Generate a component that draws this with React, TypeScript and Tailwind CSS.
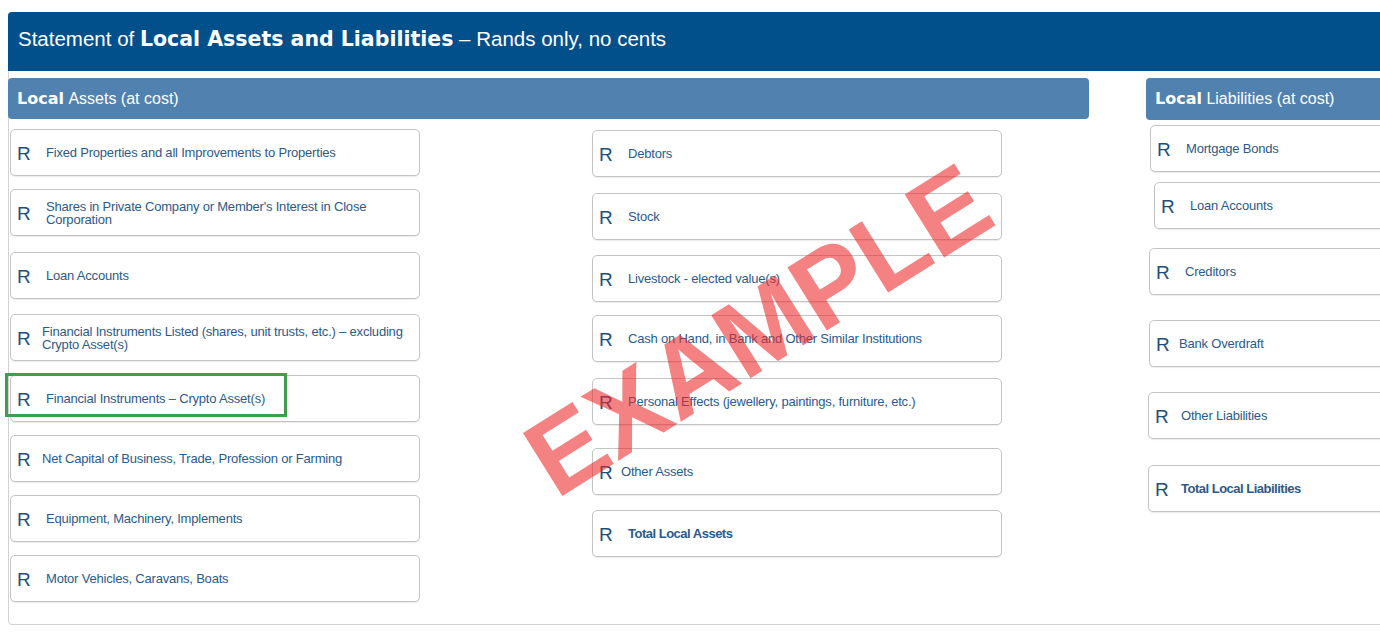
const LABEL = "font-['Liberation_Sans',Arial,sans-serif] text-[13px] tracking-[-0.2px]";

type Row = { label: string; gap: string; pad?: string; bold?: boolean; two?: boolean; flag?: boolean; shift?: string };

const LEFT: Row[] = [
  { label: "Fixed Properties and all Improvements to Properties", gap: "mt-[10px]" },
  { label: "Shares in Private Company or Member's Interest in Close Corporation", gap: "mt-[13px]", two: true },
  { label: "Loan Accounts", gap: "mt-[16px]" },
  { label: "Financial Instruments Listed (shares, unit trusts, etc.) – excluding Crypto Asset(s)", gap: "mt-[15px]", two: true, pad: "pl-[31px]" },
  { label: "Financial Instruments – Crypto Asset(s)", gap: "mt-[14px]", flag: true },
  { label: "Net Capital of Business, Trade, Profession or Farming", gap: "mt-[13px]", pad: "pl-[31px]" },
  { label: "Equipment, Machinery, Implements", gap: "mt-[13px]" },
  { label: "Motor Vehicles, Caravans, Boats", gap: "mt-[13px]" },
];

const MIDDLE: Row[] = [
  { label: "Debtors", gap: "mt-[11px]" },
  { label: "Stock", gap: "mt-[16px]" },
  { label: "Livestock - elected value(s)", gap: "mt-[15px]" },
  { label: "Cash on Hand, in Bank and Other Similar Institutions", gap: "mt-[13px]" },
  { label: "Personal Effects (jewellery, paintings, furniture, etc.)", gap: "mt-[16px]" },
  { label: "Other Assets", gap: "mt-[23px]", pad: "pl-[28px]" },
  { label: "Total Local Assets", gap: "mt-[15px]", bold: true },
];

const RIGHT: Row[] = [
  { label: "Mortgage Bonds", gap: "mt-[5px]", shift: "ml-[4px]" },
  { label: "Loan Accounts", gap: "mt-[10px]", shift: "ml-[8px]" },
  { label: "Creditors", gap: "mt-[19px]", shift: "ml-[3px]" },
  { label: "Bank Overdraft", gap: "mt-[25px]", shift: "ml-[3px]", pad: "pl-[29px]" },
  { label: "Other Liabilities", gap: "mt-[25px]", shift: "ml-[2px]", pad: "pl-[32px]" },
  { label: "Total Local Liabilities", gap: "mt-[26px]", shift: "ml-[2px]", pad: "pl-[32px]", bold: true },
];

function Field({ row }: { row: Row }) {
  return (
    <div
      className={`relative flex h-[47px] items-center rounded-[5px] border border-[#c4c4c4] bg-white shadow-[0_1px_1px_rgba(0,0,0,0.08)] ${row.gap} ${row.shift ?? ""}`}
    >
      <span className="absolute left-[6px] top-1/2 -translate-y-1/2 font-['Liberation_Sans',Arial,sans-serif] text-[19px] leading-none text-[#1d4f7e]">
        R
      </span>
      <span
        className={`${row.pad ?? "pl-[35px]"} pr-3 ${
          row.bold
            ? "font-['Liberation_Sans',Arial,sans-serif] text-[13px] font-bold tracking-[-0.5px]"
            : LABEL
        } ${row.two ? "leading-[13px]" : "leading-none"} text-[#2b5a8c]`}
      >
        {row.label}
      </span>
      {row.flag && (
        <div className="absolute -left-[6px] -top-[3px] h-[44px] w-[282px] border-[3px] border-[#3aa04a]" />
      )}
    </div>
  );
}

export default function App() {
  return (
    <div className="relative h-[635px] w-[1380px] overflow-hidden bg-white pl-2 pt-3">
      <div className="h-[613px] w-[1420px] rounded-[4px] border border-[#d2d2d2]">
        {/* Title bar */}
        <div className="-ml-px -mt-px flex h-[59px] items-center rounded-t-[4px] bg-[#02508b] pb-1 pl-[10px] font-['Liberation_Sans',Arial,sans-serif] text-[20.5px] text-white">
          <span>Statement of&nbsp;</span>
          <span className="font-['DejaVu_Sans',sans-serif] font-bold">Local Assets and Liabilities</span>
          <span>&nbsp;– Rands only, no cents</span>
        </div>

        <div className="flex">
          {/* Assets */}
          <div className="-ml-px w-[1081px] shrink-0">
            <div className="mt-[7px] flex h-[41px] items-center rounded-[4px] bg-[#5181ae] pl-[9px] font-['Liberation_Sans',Arial,sans-serif] text-[16px] text-white">
              <span className="font-['DejaVu_Sans',sans-serif] font-bold">Local</span>
              <span>&nbsp;Assets (at cost)</span>
            </div>
            <div className="flex gap-[172px] pl-[2px]">
              <div className="flex w-[410px] shrink-0 flex-col">
                {LEFT.map((r) => (
                  <Field key={r.label} row={r} />
                ))}
              </div>
              <div className="flex w-[410px] shrink-0 flex-col">
                {MIDDLE.map((r) => (
                  <Field key={r.label} row={r} />
                ))}
              </div>
            </div>
          </div>

          {/* Liabilities */}
          <div className="ml-[57px] w-[300px] shrink-0">
            <div className="mt-[7px] flex h-[42px] items-center rounded-[4px] bg-[#5181ae] pl-[9px] font-['Liberation_Sans',Arial,sans-serif] text-[16px] text-white">
              <span className="font-['DejaVu_Sans',sans-serif] font-bold">Local</span>
              <span>&nbsp;Liabilities (at cost)</span>
            </div>
            <div className="flex flex-col">
              {RIGHT.map((r) => (
                <Field key={r.label} row={r} />
              ))}
            </div>
          </div>
        </div>
      </div>

      {/* Watermark */}
      <div className="pointer-events-none absolute left-[758px] top-[330px] -translate-x-1/2 -translate-y-1/2 -rotate-[32deg] font-['Liberation_Sans',Arial,sans-serif] text-[108px] font-bold leading-none text-[rgba(236,40,40,0.58)]">
        EXAMPLE
      </div>
    </div>
  );
}
